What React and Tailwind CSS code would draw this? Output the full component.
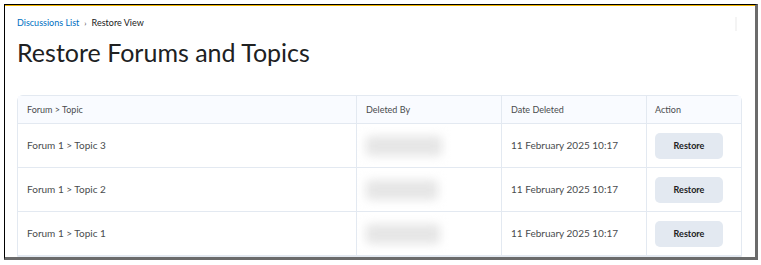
import React from "react";

const rows = ["Forum 1 > Topic 3", "Forum 1 > Topic 2", "Forum 1 > Topic 1"];
const blurW = [76, 72, 74];

export default function App() {
  return (
    <div className="w-[761px] h-[265px] bg-white pt-[4px] pl-[4px]" style={{ fontFamily: "Lato, 'Noto Sans', sans-serif" }}>
      <div className="w-[754px] h-[256px] border-t border-l border-black border-r-[3px] border-r-[#6b6b6b] border-b-[3px] border-b-[#6b6b6b] overflow-hidden relative">
        <div className="h-[1px] bg-[#f0b400]" />
        <div className="absolute right-[18px] top-[12px] w-[2px] h-[14px] bg-[#f4f4f4]" />
        <div className="pl-[12px] pr-[14px]">
          <div className="flex items-center mt-[10px] text-[9px] leading-[14px]">
            <span className="text-[#006fbf]">Discussions List</span>
            <span className="mx-[5px] text-[#494c4e] text-[8px]">›</span>
            <span className="text-[#202122]">Restore View</span>
          </div>
          <h1 className="mt-[7px] text-[25px] leading-[30px] text-[#202122]">Restore Forums and Topics</h1>
          <div className="mt-[28px] border border-[#e3e9f1] rounded-t-[6px] w-[725px]">
            <div className="grid grid-cols-[339px_145px_145px_1fr] bg-[#f9fbff] h-[28px] text-[9px] text-[#494c4e] border-b border-[#e3e9f1]">
              <div className="flex items-center pl-[9px] border-r border-[#e3e9f1]">Forum &gt; Topic</div>
              <div className="flex items-center pl-[9px] border-r border-[#e3e9f1]">Deleted By</div>
              <div className="flex items-center pl-[9px] border-r border-[#e3e9f1]">Date Deleted</div>
              <div className="flex items-center pl-[8px]">Action</div>
            </div>
            {rows.map((r, i) => (
              <div key={r} className="grid grid-cols-[339px_145px_145px_1fr] h-[44px] text-[10px] text-[#494c4e] border-b border-[#e3e9f1]">
                <div className="flex items-center pl-[9px] border-r border-[#e3e9f1]">{r}</div>
                <div className="flex items-center pl-[9px] border-r border-[#e3e9f1] overflow-hidden">
                  <div className="h-[20px] rounded-[4px] bg-[#e6e6e6] blur-[5px]" style={{ width: blurW[i] }} />
                </div>
                <div className="flex items-center pl-[9px] border-r border-[#e3e9f1]">11 February 2025 10:17</div>
                <div className="flex items-center pl-[8px]">
                  <button className="w-[68px] h-[26px] rounded-[5px] bg-[#e3e9f1] text-[9px] font-bold text-[#202122]">Restore</button>
                </div>
              </div>
            ))}
          </div>
        </div>
      </div>
    </div>
  );
}
